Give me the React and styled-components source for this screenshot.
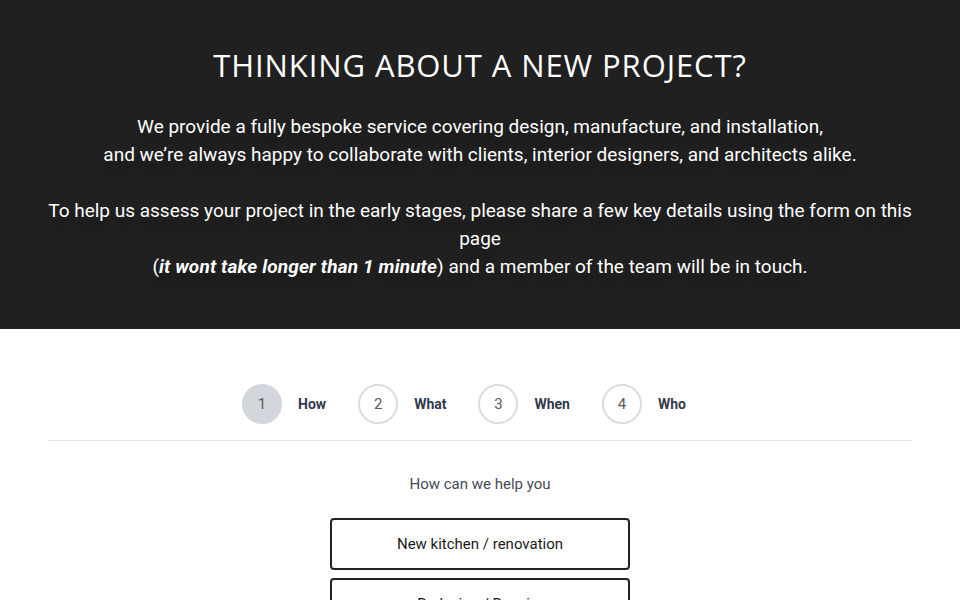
import React from "react";
import styled, { createGlobalStyle } from "styled-components";

const Global = createGlobalStyle`
  html, body { margin: 0; padding: 0; background: #ffffff; }
  body { font-family: Roboto, "Liberation Sans", Arial, sans-serif; }
  * { box-sizing: border-box; }
`;

const Hero = styled.section`
  background: #202020;
  color: #ffffff;
  padding: 44px 48px 48px;
  text-align: center;
  height: 329px;
`;

const Title = styled.h1`
  margin: 0 0 27px;
  font-family: "Open Sans", "Noto Sans", sans-serif;
  font-weight: 400;
  font-size: 31px;
  line-height: 42px;
  letter-spacing: 0.9px;
`;

const Lead = styled.p`
  margin: 0 0 28px;
  font-size: 19px;
  line-height: 28px;
  text-shadow: 0 10px 8px rgba(0, 0, 0, 0.22);
  &:last-child { margin-bottom: 0; }
  strong { font-weight: 700; font-style: italic; letter-spacing: 0.15px; }
`;

const Form = styled.section`
  padding: 55px 48px 0;
`;

const Steps = styled.div`
  display: flex;
  justify-content: center;
  padding-bottom: 16px;
  border-bottom: 1px solid #e7e7e7;
`;

const Step = styled.div`
  display: flex;
  align-items: center;
  gap: 16px;
  margin-right: 32px;
`;

const Circle = styled.div`
  width: 40px;
  height: 40px;
  border-radius: 50%;
  display: flex;
  align-items: center;
  justify-content: center;
  font-size: 15px;
  color: #5a5a5a;
  border: 2px solid ${p => (p.$active ? "#d3d6dc" : "#dcdcdc")};
  background: ${p => (p.$active ? "#d3d6dc" : "#ffffff")};
`;

const StepLabel = styled.span`
  font-size: 14px;
  font-weight: 700;
  color: #323a4d;
`;

const Question = styled.p`
  margin: 34px 0 25px;
  text-align: center;
  font-size: 15px;
  line-height: 18px;
  color: #454b57;
`;

const Options = styled.div`
  display: flex;
  flex-direction: column;
  align-items: center;
  gap: 8px;
`;

const Option = styled.button`
  width: 300px;
  height: 52px;
  background: #ffffff;
  border: 2px solid #222222;
  border-radius: 4px;
  font-family: Roboto, "Liberation Sans", Arial, sans-serif;
  font-size: 15px;
  color: #1a1a1a;
  cursor: pointer;
`;

const steps = ["How", "What", "When", "Who"];

export default function App() {
  return (
    <>
      <Global />
      <Hero>
        <Title>THINKING ABOUT A NEW PROJECT?</Title>
        <Lead>
          We provide a fully bespoke service covering design, manufacture, and installation,
          <br />
          and we’re always happy to collaborate with clients, interior designers, and architects alike.
        </Lead>
        <Lead>
          To help us assess your project in the early stages, please share a few key details using the form on this page
          <br />
          (<strong>it wont take longer than 1 minute</strong>) and a member of the team will be in touch.
        </Lead>
      </Hero>
      <Form>
        <Steps>
          {steps.map((s, i) => (
            <Step key={s}>
              <Circle $active={i === 0}>{i + 1}</Circle>
              <StepLabel>{s}</StepLabel>
            </Step>
          ))}
        </Steps>
        <Question>How can we help you</Question>
        <Options>
          <Option>New kitchen / renovation</Option>
          <Option>Redesign / Repairs</Option>
        </Options>
      </Form>
    </>
  );
}
